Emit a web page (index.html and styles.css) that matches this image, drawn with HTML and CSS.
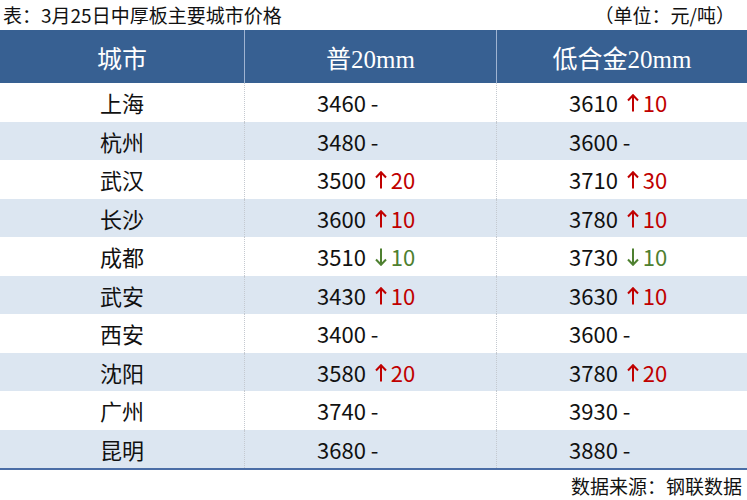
FILE: index.html
```html
<!DOCTYPE html>
<html lang="zh">
<head>
<meta charset="utf-8">
<link rel="stylesheet" href="styles.css">
</head>
<body>
<div class="page">
  <div class="top">
    <span class="title">表：3月25日中厚板主要城市价格</span>
    <span class="unit">（单位：元/吨）</span>
  </div>
  <div class="table">
    <div class="row head">
      <div class="cell c1">城市</div>
      <div class="cell c2">普20mm</div>
      <div class="cell c3">低合金20mm</div>
    </div>
    <div class="row">
      <div class="cell c1">上海</div>
      <div class="cell num">3460 -</div>
      <div class="cell num">3610<span class="up"><svg viewBox="0 0 12 18"><path d="M6 17.5V1.5M1 6.5L6 1.2L11 6.5"/></svg>10</span></div>
    </div>
    <div class="row alt">
      <div class="cell c1">杭州</div>
      <div class="cell num">3480 -</div>
      <div class="cell num">3600 -</div>
    </div>
    <div class="row">
      <div class="cell c1">武汉</div>
      <div class="cell num">3500<span class="up"><svg viewBox="0 0 12 18"><path d="M6 17.5V1.5M1 6.5L6 1.2L11 6.5"/></svg>20</span></div>
      <div class="cell num">3710<span class="up"><svg viewBox="0 0 12 18"><path d="M6 17.5V1.5M1 6.5L6 1.2L11 6.5"/></svg>30</span></div>
    </div>
    <div class="row alt">
      <div class="cell c1">长沙</div>
      <div class="cell num">3600<span class="up"><svg viewBox="0 0 12 18"><path d="M6 17.5V1.5M1 6.5L6 1.2L11 6.5"/></svg>10</span></div>
      <div class="cell num">3780<span class="up"><svg viewBox="0 0 12 18"><path d="M6 17.5V1.5M1 6.5L6 1.2L11 6.5"/></svg>10</span></div>
    </div>
    <div class="row">
      <div class="cell c1">成都</div>
      <div class="cell num">3510<span class="down"><svg viewBox="0 0 12 18"><path d="M6 0.5V16.5M1 11.5L6 16.8L11 11.5"/></svg>10</span></div>
      <div class="cell num">3730<span class="down"><svg viewBox="0 0 12 18"><path d="M6 0.5V16.5M1 11.5L6 16.8L11 11.5"/></svg>10</span></div>
    </div>
    <div class="row alt">
      <div class="cell c1">武安</div>
      <div class="cell num">3430<span class="up"><svg viewBox="0 0 12 18"><path d="M6 17.5V1.5M1 6.5L6 1.2L11 6.5"/></svg>10</span></div>
      <div class="cell num">3630<span class="up"><svg viewBox="0 0 12 18"><path d="M6 17.5V1.5M1 6.5L6 1.2L11 6.5"/></svg>10</span></div>
    </div>
    <div class="row">
      <div class="cell c1">西安</div>
      <div class="cell num">3400 -</div>
      <div class="cell num">3600 -</div>
    </div>
    <div class="row alt">
      <div class="cell c1">沈阳</div>
      <div class="cell num">3580<span class="up"><svg viewBox="0 0 12 18"><path d="M6 17.5V1.5M1 6.5L6 1.2L11 6.5"/></svg>20</span></div>
      <div class="cell num">3780<span class="up"><svg viewBox="0 0 12 18"><path d="M6 17.5V1.5M1 6.5L6 1.2L11 6.5"/></svg>20</span></div>
    </div>
    <div class="row">
      <div class="cell c1">广州</div>
      <div class="cell num">3740 -</div>
      <div class="cell num">3930 -</div>
    </div>
    <div class="row alt">
      <div class="cell c1">昆明</div>
      <div class="cell num">3680 -</div>
      <div class="cell num">3880 -</div>
    </div>
  </div>
  <div class="source">数据来源：钢联数据</div>
</div>
</body>
</html>
```

FILE: styles.css
```css
html, body {
  margin: 0;
  padding: 0;
  background: #ffffff;
}
.page {
  width: 747px;
  height: 500px;
  font-family: "Noto Sans CJK SC", "Noto Sans", sans-serif;
  color: #111111;
}
.top {
  display: flex;
  justify-content: space-between;
  align-items: center;
  height: 30px;
  font-size: 19px;
  line-height: 26px;
  padding: 0 12px 0 3px;
}
.table {
  border-bottom: 2px solid #4a6da6;
}
.row {
  display: grid;
  grid-template-columns: 244px 252px 251px;
  height: 38.5px;
  align-items: center;
  font-size: 22px;
}
.row.alt {
  background: #dce6f1;
}
.row .cell {
  height: 100%;
  display: flex;
  align-items: center;
}
.row .cell + .cell {
  border-left: 1px dotted #c4c9d0;
}
.c1 {
  justify-content: center;
}
.num {
  padding-left: 72px;
}
.head {
  height: 53px;
  background: #376092;
  color: #ffffff;
  font-family: "Liberation Serif", "Noto Sans CJK SC", serif;
  font-size: 25px;
}
.head .cell {
  justify-content: center;
  padding-left: 0;
}
.head .cell + .cell {
  border-left: 1px solid #9fb4d2;
}
.up, .down {
  display: inline-flex;
  align-items: center;
}
.up {
  color: #c00000;
}
.down {
  color: #4e8030;
}
.up svg, .down svg {
  width: 12px;
  height: 18px;
  margin: 2px 4px 0 9px;
  fill: none;
  stroke: currentColor;
  stroke-width: 2;
}
.source {
  text-align: right;
  font-size: 19px;
  line-height: 26px;
  padding: 3px 5px 0 0;
}
```
